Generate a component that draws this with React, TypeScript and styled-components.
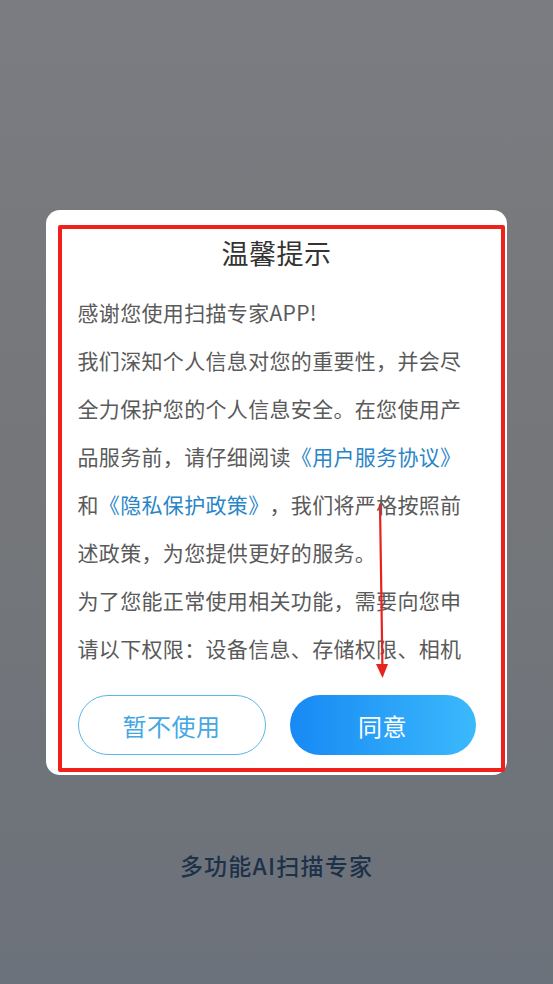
import React from 'react';
import styled, { createGlobalStyle } from 'styled-components';

const GlobalStyle = createGlobalStyle`
  html, body {
    margin: 0;
    padding: 0;
  }
  body {
    font-family: "Noto Sans CJK SC", "Noto Sans", sans-serif;
    text-spacing-trim: space-all;
  }
`;

const Page = styled.div`
  width: 553px;
  height: 984px;
  background: linear-gradient(180deg, #7b7c81 0%, #747679 50%, #6c727b 100%);
  display: flex;
  flex-direction: column;
  align-items: center;
  overflow: hidden;
`;

const Dialog = styled.div`
  position: relative;
  margin-top: 210px;
  margin-left: -1px;
  width: 461px;
  height: 565px;
  box-sizing: border-box;
  padding: 20px 31px 20px 32px;
  background: #ffffff;
  border-radius: 14px;
  display: flex;
  flex-direction: column;
`;

const Title = styled.div`
  height: 46px;
  line-height: 46px;
  text-align: center;
  font-size: 27px;
  color: #333333;
  letter-spacing: 0.5px;
`;

const Content = styled.div`
  margin-top: 12px;
  height: 384px;
  overflow: hidden;
  font-size: 21px;
  letter-spacing: 0.33px;
  line-height: 48px;
  color: #5a5a5a;
  text-spacing-trim: space-all;
`;

const Paragraph = styled.p`
  margin: 0;
`;

const Link = styled.span`
  color: #2a85c7;
`;

const Actions = styled.div`
  margin-top: 23px;
  display: flex;
  gap: 24px;
`;

const Button = styled.button<{ $primary?: boolean }>`
  flex: 1;
  height: 60px;
  border-radius: 30px;
  font-family: inherit;
  font-size: 24px;
  letter-spacing: 0.5px;
  cursor: pointer;
  border: ${p => (p.$primary ? 'none' : '1.5px solid #5cb6e9')};
  background: ${p => (p.$primary ? 'linear-gradient(90deg, #1789f4 0%, #3bb9fc 100%)' : '#ffffff')};
  color: ${p => (p.$primary ? '#ffffff' : '#45a8e2')};
`;

const Footer = styled.div`
  margin-top: 76px;
  font-size: 23px;
  line-height: 28px;
  font-weight: 500;
  color: #1d3149;
  letter-spacing: 1.2px;
`;

// annotation overlays drawn over the dialog
const MarkBox = styled.div`
  position: absolute;
  left: 12px;
  top: 15px;
  width: 447px;
  height: 547px;
  box-sizing: border-box;
  border: 4px solid #f0201a;
  border-radius: 2px;
  pointer-events: none;
`;

const Arrow = styled.svg`
  position: absolute;
  left: 323px;
  top: 292px;
  pointer-events: none;
`;

const App: React.FC = () => {
  return (
    <>
      <GlobalStyle />
      <Page>
        <Dialog>
          <Title>温馨提示</Title>
          <Content>
            <Paragraph>感谢您使用扫描专家APP!</Paragraph>
            <Paragraph>
              我们深知个人信息对您的重要性，并会尽全力保护您的个人信息安全。在您使用产品服务前，请仔细阅读
              <Link>《用户服务协议》</Link>和<Link>《隐私保护政策》</Link>
              ，我们将严格按照前述政策，为您提供更好的服务。
            </Paragraph>
            <Paragraph>
              为了您能正常使用相关功能，需要向您申请以下权限：设备信息、存储权限、相机权限等，您可以在设置中随时关闭。
            </Paragraph>
          </Content>
          <Actions>
            <Button>暂不使用</Button>
            <Button $primary>同意</Button>
          </Actions>
          <MarkBox />
          <Arrow width="24" height="190" viewBox="0 0 24 190">
            <path d="M11 3 L13.5 170" stroke="#e8231d" strokeWidth="2.2" fill="none" strokeLinecap="round" />
            <path d="M7 162 L19 162 L13.5 176 Z" fill="#e8231d" />
          </Arrow>
        </Dialog>
        <Footer>多功能AI扫描专家</Footer>
      </Page>
    </>
  );
};

export default App;
